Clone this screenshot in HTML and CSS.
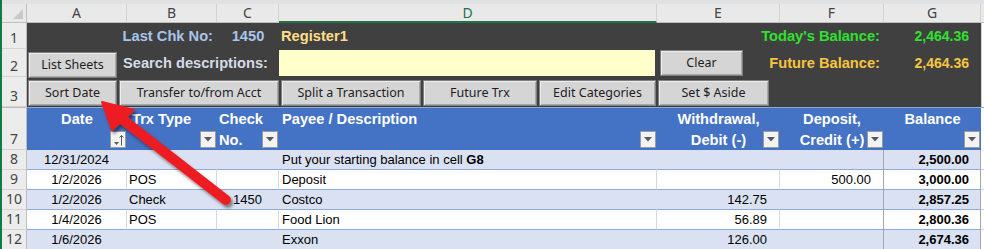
FILE: index.html
```html
<!DOCTYPE html>
<html lang="en">
<head>
    <meta charset="UTF-8">
    <title>Register1</title>
    <link rel="stylesheet" href="styles.css">
</head>
<body>
    <div class="top-edge"></div>
    <div class="sheet">
        <!-- column letters -->
        <div class="corner"></div>
        <div class="col-head">A</div>
        <div class="col-head">B</div>
        <div class="col-head">C</div>
        <div class="col-head active">D</div>
        <div class="col-head">E</div>
        <div class="col-head">F</div>
        <div class="col-head">G</div>
        <div class="col-head"></div>

        <!-- dark control band, rows 1-3 -->
        <div class="row-head">1</div>
        <div class="band">
            <div class="chk-label">Last Chk No:</div>
            <div class="chk-no">1450</div>
            <div class="sheet-name">Register1</div>
            <div class="bal-label today">Today's Balance:</div>
            <div class="bal-value today">2,464.36</div>

            <div class="search">
                <button class="macro list">List Sheets</button>
                <span class="search-label">Search descriptions:</span>
            </div>
            <div class="search-box"></div>
            <div class="clear-cell">
                <button class="macro clear">Clear</button>
                <span class="bal-label future">Future Balance:</span>
            </div>
            <div class="bal-value future">2,464.36</div>

            <div class="macro-bar">
                <button class="macro" style="width: 89px">Sort Date</button>
                <button class="macro" style="width: 160px">Transfer to/from Acct</button>
                <button class="macro" style="width: 140px">Split a Transaction</button>
                <button class="macro" style="width: 114px">Future Trx</button>
                <button class="macro" style="width: 117px">Edit Categories</button>
                <button class="macro" style="width: 111px">Set $ Aside</button>
            </div>
        </div>
        <div class="gap-cells"></div>
        <div class="row-head">2</div>
        <div class="row-head">3</div>

        <!-- table header -->
        <div class="row-head tall">7</div>
        <div class="hd center">Date<span class="filter"><svg width="14" height="14" viewBox="0 0 14 14"><path d="M3 9h5l-2.5 3z" fill="#595959"/><path d="M10.5 2.5v10M8.5 4.5l2-2 2 2" stroke="#595959" fill="none"/></svg></span></div>
        <div class="hd type">Trx Type<span class="filter"><svg width="8" height="5"><path d="M0 0h8L4 4.5z" fill="#595959"/></svg></span></div>
        <div class="hd">Check<br>No.<span class="filter"><svg width="8" height="5"><path d="M0 0h8L4 4.5z" fill="#595959"/></svg></span></div>
        <div class="hd payee">Payee / Description<span class="filter"><svg width="8" height="5"><path d="M0 0h8L4 4.5z" fill="#595959"/></svg></span></div>
        <div class="hd center">Withdrawal,<br>Debit (-)<span class="filter"><svg width="8" height="5"><path d="M0 0h8L4 4.5z" fill="#595959"/></svg></span></div>
        <div class="hd center">Deposit,<br>Credit (+)<span class="filter"><svg width="8" height="5"><path d="M0 0h8L4 4.5z" fill="#595959"/></svg></span></div>
        <div class="hd center">Balance<span class="filter"><svg width="8" height="5"><path d="M0 0h8L4 4.5z" fill="#595959"/></svg></span></div>
        <div class="hd-rest"></div>

        <!-- register rows -->
        <div class="row alt">
            <div class="row-head">8</div>
            <div class="c date">12/31/2024</div>
            <div class="c"></div>
            <div class="c"></div>
            <div class="c payee">Put your starting balance in cell <b>G8</b></div>
            <div class="c num"></div>
            <div class="c num dep"></div>
            <div class="c num bal">2,500.00</div>
            <div class="c rest"></div>
        </div>
        <div class="row">
            <div class="row-head">9</div>
            <div class="c date">1/2/2026</div>
            <div class="c">POS</div>
            <div class="c"></div>
            <div class="c payee">Deposit</div>
            <div class="c num"></div>
            <div class="c num dep">500.00</div>
            <div class="c num bal">3,000.00</div>
            <div class="c rest"></div>
        </div>
        <div class="row alt">
            <div class="row-head">10</div>
            <div class="c date">1/2/2026</div>
            <div class="c">Check</div>
            <div class="c center">1450</div>
            <div class="c payee">Costco</div>
            <div class="c num">142.75</div>
            <div class="c num dep"></div>
            <div class="c num bal">2,857.25</div>
            <div class="c rest"></div>
        </div>
        <div class="row">
            <div class="row-head">11</div>
            <div class="c date">1/4/2026</div>
            <div class="c">POS</div>
            <div class="c"></div>
            <div class="c payee">Food Lion</div>
            <div class="c num">56.89</div>
            <div class="c num dep"></div>
            <div class="c num bal">2,800.36</div>
            <div class="c rest"></div>
        </div>
        <div class="row alt">
            <div class="row-head">12</div>
            <div class="c date">1/6/2026</div>
            <div class="c"></div>
            <div class="c"></div>
            <div class="c payee">Exxon</div>
            <div class="c num">126.00</div>
            <div class="c num dep"></div>
            <div class="c num bal">2,674.36</div>
            <div class="c rest"></div>
        </div>
    </div>

    <!-- red callout arrow pointing at the Sort Date button -->
    <svg class="callout" width="984" height="249" viewBox="0 0 984 249">
        <defs>
            <filter id="shade" x="-20%" y="-20%" width="140%" height="140%">
                <feDropShadow dx="2" dy="3" stdDeviation="1.5" flood-color="#000" flood-opacity="0.45"/>
            </filter>
        </defs>
        <g filter="url(#shade)" fill="#ec1c24" stroke="#ec1c24">
            <line x1="122" y1="119" x2="226" y2="200" stroke-width="10" stroke-linecap="round"/>
            <polygon points="102,102 112,130 134,110" stroke-width="2" stroke-linejoin="round"/>
        </g>
    </svg>
</body>
</html>
```

FILE: styles.css
```css
* {
    margin: 0;
    padding: 0;
    box-sizing: border-box;
}

body {
    background: #fff;
    font-family: "Liberation Sans", Arial, sans-serif;
    overflow: hidden;
    position: relative;
}

.top-edge {
    height: 4px;
    background: #dfe3e6;
    border-left: 2px solid #107c41;
}

.sheet {
    display: grid;
    grid-template-columns: 25px 100px 90px 62px 378px 123px 104px 97px 1fr;
    grid-template-rows: 19px 26px 28px 30px 43px repeat(5, 20px);
    border-left: 2px solid #107c41;
}

/* headings */
.corner,
.col-head {
    background: #e9e9e9;
    border-right: 1px solid #d2d2d2;
    border-bottom: 1px solid #bdbdbd;
    font-family: "Noto Sans", sans-serif;
    font-size: 14px;
    line-height: 18px;
    color: #444;
    text-align: center;
}

.corner {
    position: relative;
    border-right-color: #bdbdbd;
}

.corner::after {
    content: "";
    position: absolute;
    right: 3px;
    bottom: 3px;
    border-left: 10px solid transparent;
    border-bottom: 10px solid #c9c9c9;
}

.col-head.active {
    color: #217346;
    border-bottom: 2px solid #217346;
}

.row-head {
    background: #ececec;
    border-right: 1px solid #bdbdbd;
    border-bottom: 1px solid #d4d4d4;
    font-family: "Noto Sans", sans-serif;
    font-size: 14px;
    line-height: 18px;
    color: #444;
    display: flex;
    align-items: flex-end;
    justify-content: center;
    padding-bottom: 1px;
}

.row-head.tall {
    border-top: 1px solid #bdbdbd;
}

/* dark band */
.band {
    grid-column: 2 / 9;
    grid-row: span 3;
    background: #404040;
    display: grid;
    grid-template-columns: 100px 90px 62px 378px 123px 104px 97px;
    grid-template-rows: 26px 28px 30px;
    align-items: center;
    font-size: 11pt;
    font-weight: bold;
    white-space: nowrap;
}

.gap-cells {
    grid-row: span 3;
    border-left: 1px solid #d4d4d4;
}

.chk-label {
    grid-column: 1 / 3;
    text-align: right;
    padding-right: 4px;
    color: #a9c4eb;
}

.chk-no {
    text-align: center;
    color: #a9c4eb;
}

.sheet-name {
    padding-left: 2px;
    color: #ffdf86;
}

.bal-label {
    padding-right: 4px;
}

.bal-label.today {
    grid-column: 5 / 7;
    text-align: right;
    color: #2fe02f;
}

.bal-value {
    text-align: right;
    padding-right: 12px;
    font-size: 14px;
}

.bal-value.today {
    color: #2fe02f;
}

.bal-value.future,
.bal-label.future {
    color: #f7c53f;
}

.search {
    grid-column: 1 / 4;
    display: flex;
    align-items: center;
    padding-left: 1px;
    height: 100%;
}

.search-label {
    margin-left: 6px;
    color: #d6dce5;
}

.search-box {
    height: 26px;
    background: #ffffcc;
    margin-right: 2px;
}

.clear-cell {
    grid-column: 5 / 7;
    display: flex;
    align-items: center;
    justify-content: space-between;
    padding-left: 3px;
}

.macro-bar {
    grid-column: 1 / -1;
    display: flex;
    gap: 2px;
    padding: 3px 0 1px 1px;
    height: 100%;
}

.macro {
    font-family: "Noto Sans", sans-serif;
    font-size: 12.5px;
    font-weight: normal;
    color: #1e1e1e;
    background: #d5d5d5;
    border: 1px solid #7f7f7f;
    box-shadow: inset 1px 1px 0 #ececec, inset -1px -1px 0 #a9a9a9;
    height: 26px;
    line-height: 22px;
}

.macro.list {
    width: 89px;
    margin-top: 3px;
}

.macro.clear {
    width: 83px;
}

/* table header */
.hd {
    position: relative;
    background: #4472c4;
    color: #fff;
    font-size: 11pt;
    font-weight: bold;
    line-height: 20.5px;
    padding: 1px 2px 0;
    white-space: nowrap;
    border-top: 1px solid #8eaadb;
}

.hd.center {
    text-align: center;
}

.hd.type {
    padding-left: 5px;
}

.hd.payee {
    padding-left: 3px;
}

.hd-rest {
    border-top: 1px solid #8eaadb;
}

.filter {
    position: absolute;
    right: 1px;
    bottom: 2px;
    width: 16px;
    height: 17px;
    background: #f3f3f3;
    border: 1px solid #9a9a9a;
    display: flex;
    align-items: center;
    justify-content: center;
}

/* register rows */
.row {
    display: contents;
}

.c {
    background: #fff;
    border-bottom: 1px solid #8eaadb;
    border-right: 1px solid #d3d9e4;
    font-size: 13px;
    line-height: 19px;
    padding: 0 2px;
    white-space: nowrap;
    color: #000;
}

.row.alt .c {
    background: #d9e1f2;
    border-right-color: #d9e1f2;
}

.c.date,
.c.center {
    text-align: center;
}

.c.payee {
    padding-left: 3px;
}

.c.num {
    text-align: right;
    padding-right: 12px;
}

.row .c.dep,
.row .c.bal {
    border-right-color: #a6a6a6;
}

.c.bal {
    font-weight: bold;
    padding-right: 11px;
}

.row .c.rest {
    background: #fff;
    border-right: none;
    border-bottom-color: #d4d4d4;
}

.callout {
    position: absolute;
    left: 0;
    top: 0;
    pointer-events: none;
}
```
